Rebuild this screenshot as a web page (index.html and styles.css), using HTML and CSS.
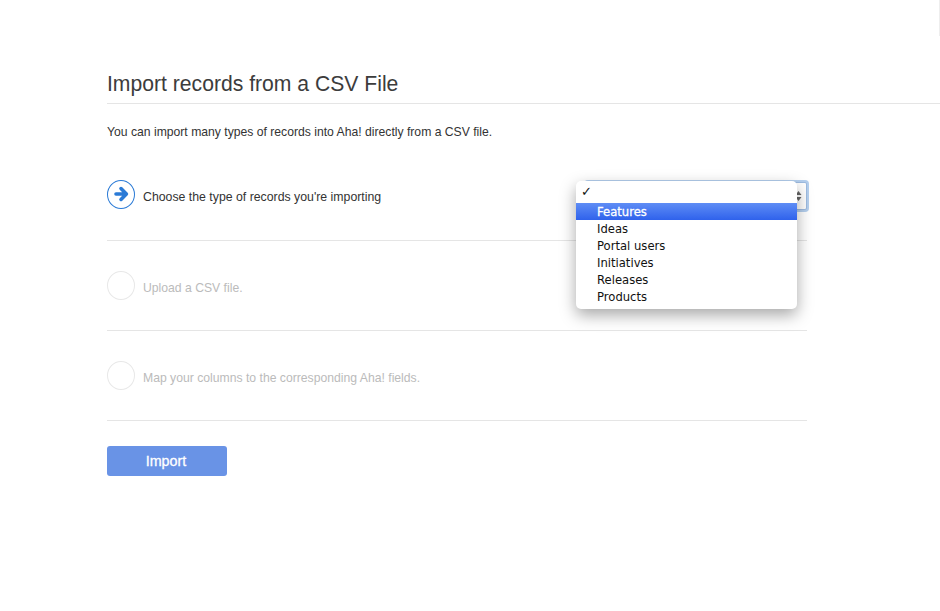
FILE: index.html
```html
<!DOCTYPE html>
<html lang="en">
<head>
  <meta charset="UTF-8" />
  <title>Import records from a CSV File</title>
  <link rel="stylesheet" href="styles.css">
</head>
<body>

<div class="edge-line"></div>

<main class="page">
  <h1>Import records from a CSV File</h1>
  <p class="intro">You can import many types of records into Aha! directly from a CSV file.</p>

  <div class="steps">
    <!-- Step 1 -->
    <div class="step step-active">
      <div class="step-label">
        <span class="step-icon">
          <svg width="18" height="18" viewBox="0 0 18 18">
            <path d="M4 9H14M9 3.6L14.4 9L9 14.4" fill="none" stroke="#2a7ad6" stroke-width="3.6" stroke-linecap="round" stroke-linejoin="round"/>
          </svg>
        </span>
        <span class="step-text">Choose the type of records you're importing</span>
      </div>
      <div class="select-wrap">
        <div class="select-box">
          <svg class="select-arrows" width="7" height="12" viewBox="0 0 7 12">
            <path d="M3.5 1L6.5 5H.5ZM3.5 11L.5 7H6.5Z" fill="#666"/>
          </svg>
        </div>
        <ul class="select-menu">
          <li class="checked">✓</li>
          <li class="selected">Features</li>
          <li>Ideas</li>
          <li>Portal users</li>
          <li>Initiatives</li>
          <li>Releases</li>
          <li>Products</li>
        </ul>
      </div>
    </div>

    <!-- Step 2 -->
    <div class="step">
      <div class="step-label">
        <span class="step-icon"></span>
        <span class="step-text">Upload a CSV file.</span>
      </div>
    </div>

    <!-- Step 3 -->
    <div class="step">
      <div class="step-label">
        <span class="step-icon"></span>
        <span class="step-text">Map your columns to the corresponding Aha! fields.</span>
      </div>
    </div>
  </div>

  <button class="import-btn">Import</button>
</main>

</body>
</html>
```

FILE: styles.css
```css
body { font-family: "Liberation Sans", Arial, sans-serif; margin: 0; padding: 0; background: #fff; color: #333; }
.edge-line { position: absolute; top: 0; right: 0; width: 1px; height: 36px; background: #eee; }
.page { padding: 72px 0 0 107px; }
h1 { margin: 0; padding-bottom: 7px; height: 24px; line-height: 24px; font-size: 21.15px; font-weight: normal; color: #3c3c3c; border-bottom: 1px solid #e5e5e5; }
.intro { margin: 20px 0 0; font-size: 12.18px; line-height: 16px; color: #333; }
.steps { width: 700px; margin-top: 11px; }
.step { display: flex; justify-content: space-between; align-items: center; height: 89px; border-bottom: 1px solid #e5e5e5; color: #bbb; font-size: 12.2px; }
.step-active { color: #333; font-size: 12.3px; }
.step-active .step-label { margin-bottom: 3px; }
.step-label { display: flex; align-items: center; gap: 8px; }
.step-text { padding-top: 4px; }
.step-active .step-text { padding-top: 6px; }
.step-icon { display: flex; align-items: center; justify-content: center; box-sizing: border-box; width: 28px; height: 29px; border: 1px solid #e8e8e8; border-radius: 50%; }
.step-active .step-icon { border-color: #2a7ad6; }
.select-wrap { position: relative; width: 221px; height: 28px; }
.select-box { display: flex; align-items: center; justify-content: flex-end; height: 100%; padding-right: 4px; box-sizing: border-box; background: #fff; border: 1px solid #9dbbe0; border-radius: 2px; box-shadow: 0 0 0 2px #b4cfee; }
.select-menu { position: absolute; top: -1px; left: -10px; width: 221px; margin: 0; padding: 0 0 4px; list-style: none; background: #fff; border-radius: 5px; box-shadow: 0 6px 16px rgba(0, 0, 0, 0.35); font-family: "DejaVu Sans", sans-serif; font-size: 11.6px; color: #111; }
.select-menu li { height: 17px; line-height: 19px; padding-left: 21px; }
.select-menu .checked { height: 22px; line-height: 22px; padding-left: 5px; font-size: 13px; font-weight: bold; }
.select-menu .selected { background: linear-gradient(#5f8df5, #2f62ec); color: #fff; -webkit-text-stroke: 0.3px #fff; }
.import-btn { display: block; width: 120px; height: 30px; margin-top: 25px; padding: 0 2px 0 0; border: none; border-radius: 3px; background: #6993e6; color: #fff; font-family: inherit; font-size: 14.3px; -webkit-text-stroke: 0.3px #fff; }
```
